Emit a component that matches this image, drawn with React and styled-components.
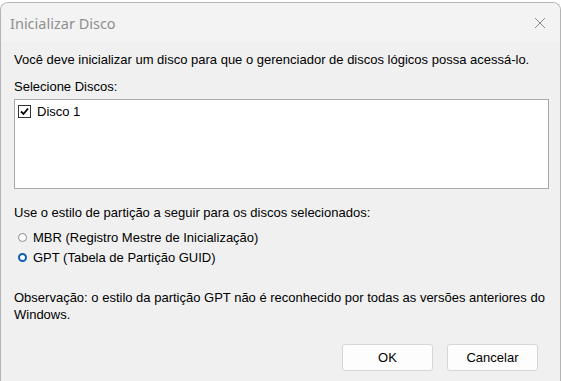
import React from "react";
import styled, { createGlobalStyle } from "styled-components";

const GlobalStyle = createGlobalStyle`
  html, body {
    margin: 0;
    padding: 0;
    background: #ffffff;
  }
  body {
    font-family: "Liberation Sans", Arial, sans-serif;
  }
`;

const Frame = styled.div`
  width: 561px;
  height: 381px;
  box-sizing: border-box;
  padding-top: 2px;
  background: #ffffff;
`;

const Window = styled.div`
  height: 379px;
  box-sizing: border-box;
  border: 1px solid #b4b4b4;
  border-bottom: none;
  border-radius: 8px 8px 0 0;
  background: #f0f0f0;
  display: flex;
  flex-direction: column;
  overflow: hidden;
`;

const TitleBar = styled.div`
  height: 39px;
  flex: none;
  background: #f3f3f3;
  display: flex;
  align-items: center;
  justify-content: space-between;
  padding: 0 14px 0 9px;
`;

const Title = styled.span`
  font-family: "Noto Sans", "Liberation Sans", sans-serif;
  font-size: 14.5px;
  color: #8f8f8f;
  padding-top: 1px;
`;

const Body = styled.div`
  flex: 1;
  display: flex;
  flex-direction: column;
  padding: 8.5px 11px 0 13px;
  font-size: 13px;
  color: #000;
`;

const Line = styled.div`
  line-height: 17px;
  margin-top: ${(p) => p.$mt || 0}px;
`;

const ListBox = styled.div`
  margin-top: 4.5px;
  height: 81px;
  background: #fff;
  border: 1px solid #a9a9a9;
  padding: 3px 3px 4px;
  box-sizing: content-box;
`;

const ListItem = styled.label`
  display: flex;
  align-items: center;
  gap: 6px;
  height: 16px;
`;

const CheckBox = styled.span`
  width: 11px;
  height: 11px;
  border: 1px solid #333;
  background: #fff;
  display: flex;
  align-items: center;
  justify-content: center;
`;

const RadioRow = styled.div`
  display: flex;
  align-items: center;
  gap: 6px;
  height: 16px;
  margin-top: ${(p) => p.$mt || 0}px;
  padding-left: 4px;
`;

const Radio = styled.span`
  width: 9px;
  height: 9px;
  border-radius: 50%;
  box-sizing: border-box;
  background: #fff;
  border: ${(p) => (p.$on ? "2.5px solid #0a5fb4" : "1px solid #8a8a8a")};
`;

const Buttons = styled.div`
  margin-top: auto;
  margin-bottom: 10px;
  display: flex;
  justify-content: flex-end;
  gap: 14px;
  padding-right: 11px;
`;

const Button = styled.button`
  width: 91px;
  height: 27px;
  background: #fdfdfd;
  border: 1px solid #d6d6d6;
  border-radius: 3px;
  font-family: "Liberation Sans", Arial, sans-serif;
  font-size: 13px;
  color: #000;
  padding: 0;
`;

const CloseIcon = () => (
  <svg width="12" height="12" viewBox="0 0 12 12">
    <path d="M1 1 L11 11 M11 1 L1 11" stroke="#8a8a8a" strokeWidth="1" />
  </svg>
);

export default function App() {
  return (
    <>
      <GlobalStyle />
      <Frame>
        <Window>
          <TitleBar>
            <Title>Inicializar Disco</Title>
            <CloseIcon />
          </TitleBar>
          <Body>
            <Line>Você deve inicializar um disco para que o gerenciador de discos lógicos possa acessá-lo.</Line>
            <Line $mt={10}>Selecione Discos:</Line>
            <ListBox>
              <ListItem>
                <CheckBox>
                  <svg width="9" height="9" viewBox="0 0 9 9">
                    <path d="M1 4.5 L3.5 7 L8 1.5" stroke="#000" strokeWidth="1.8" fill="none" />
                  </svg>
                </CheckBox>
                Disco 1
              </ListItem>
            </ListBox>
            <Line $mt={14.5}>Use o estilo de partição a seguir para os discos selecionados:</Line>
            <RadioRow $mt={8.5}>
              <Radio />
              MBR (Registro Mestre de Inicialização)
            </RadioRow>
            <RadioRow $mt={4}>
              <Radio $on />
              GPT (Tabela de Partição GUID)
            </RadioRow>
            <Line $mt={23.5}>
              Observação: o estilo da partição GPT não é reconhecido por todas as versões anteriores do Windows.
            </Line>
            <Buttons>
              <Button>OK</Button>
              <Button>Cancelar</Button>
            </Buttons>
          </Body>
        </Window>
      </Frame>
    </>
  );
}
